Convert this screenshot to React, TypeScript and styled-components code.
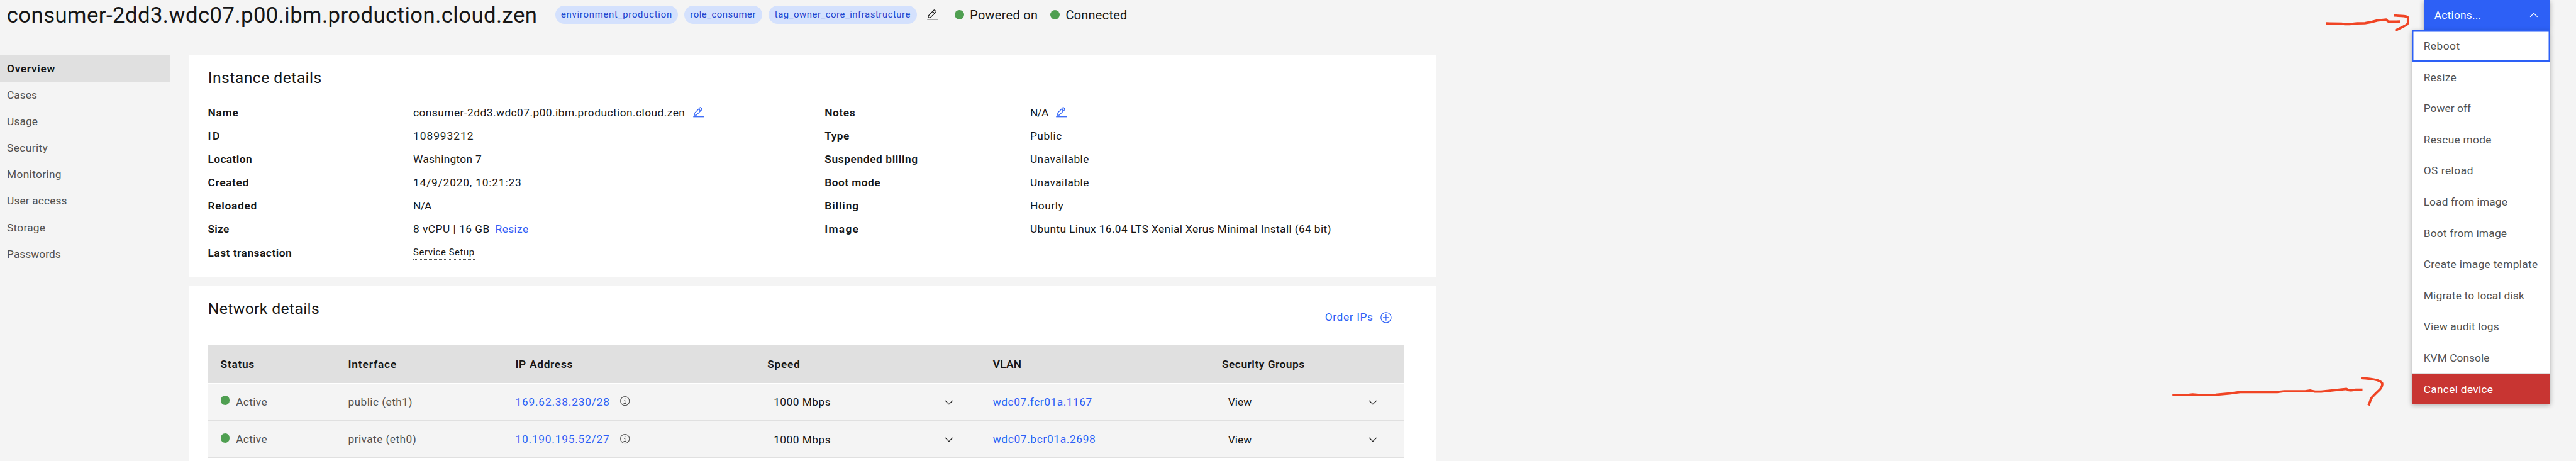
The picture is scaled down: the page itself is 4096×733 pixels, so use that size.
import React from "react";
import styled, { createGlobalStyle, css } from "styled-components";

/* Converts a design pixel (3306px-wide canvas) to a screen pixel. */
const u = (n: number) => `${+(n * 1.23896).toFixed(3)}px`;

const color = {
  page: "#f4f4f4",
  surface: "#ffffff",
  layer: "#e0e0e0",
  text: "#161616",
  muted: "#525252",
  blue: "#2d60f6",
  tag: "#d4e1fd",
  tagText: "#2146cf",
  green: "#4f9f51",
  red: "#c83532",
  ink: "#f04424",
};

const GlobalStyle = createGlobalStyle`
  *, *::before, *::after { box-sizing: border-box; }
  html, body { margin: 0; padding: 0; background: ${color.page}; }
  body {
    font-family: Roboto, "Noto Sans", sans-serif;
    font-size: ${u(14)};
    line-height: ${u(18)};
    color: ${color.text};
    overflow: hidden;
  }
`;

const Page = styled.div`
  position: relative;
  width: 4096px;
  height: 733px;
  overflow: hidden;
`;

/* Text run with its own tracking, given in thousandths of an em. */
const Text = styled.span<{ $track?: number }>`
  letter-spacing: ${(p) => (p.$track ?? 20) / 1000}em;
  white-space: nowrap;
`;

const Icon = styled.svg<{ $size?: number }>`
  display: block;
  flex: none;
  width: ${(p) => u(p.$size ?? 16)};
  height: ${(p) => u(p.$size ?? 16)};
  fill: currentColor;
`;

const Dot = styled.span`
  flex: none;
  width: ${u(12)};
  height: ${u(12)};
  border-radius: 50%;
  background: ${color.green};
`;

/* ---------- header ---------- */

const Header = styled.header`
  display: flex;
  align-items: center;
  height: ${u(38)};
  padding: 0 ${u(33)} 0 ${u(8.7)};
  margin-bottom: ${u(33)};
`;

const Title = styled.h1`
  flex: none;
  width: ${u(704.2)};
  margin: 0;
  padding-top: ${u(0.9)};
  font-size: ${u(28)};
  line-height: ${u(36)};
  font-weight: 400;
`;

const Tags = styled.div`
  display: flex;
  gap: ${u(8.1)};
`;

const Tag = styled.span<{ $width: number }>`
  display: flex;
  align-items: center;
  justify-content: center;
  width: ${(p) => u(p.$width)};
  height: ${u(24)};
  border-radius: ${u(12)};
  background: ${color.tag};
  color: ${color.tagText};
  font-size: ${u(12)};
`;

const EditTags = styled.button`
  display: flex;
  margin: 0 ${u(20.2)} 0 ${u(12.1)};
  padding: 0;
  border: 0;
  background: none;
  color: ${color.text};
`;

const Status = styled.div`
  display: flex;
  align-items: center;
  width: ${u(122.9)};
  gap: ${u(7.5)};
  font-size: ${u(16)};
  line-height: ${u(22)};
`;

const StatusText = styled(Text)`
  padding-top: ${u(1.2)};
`;

const Actions = styled.div`
  position: relative;
  align-self: flex-start;
  margin-left: auto;
`;

const ActionsButton = styled.button`
  display: flex;
  align-items: center;
  justify-content: space-between;
  width: ${u(162)};
  height: ${u(39)};
  padding: 0 ${u(13)} ${u(0.7)} ${u(13.2)};
  border: 0;
  background: ${color.blue};
  color: #fff;
  font: inherit;
  box-shadow: 0 ${u(2)} ${u(6)} rgba(0, 0, 0, 0.3);
`;

const Menu = styled.ul`
  position: absolute;
  top: 100%;
  right: 0;
  z-index: 2;
  width: ${u(178)};
  margin: 0;
  padding: 0;
  list-style: none;
  background: ${color.surface};
  box-shadow: 0 ${u(2)} ${u(6)} rgba(0, 0, 0, 0.3);
`;

const MenuItem = styled.li<{ $focused?: boolean; $danger?: boolean }>`
  display: flex;
  align-items: center;
  height: ${u(40)};
  padding: ${u(0.6)} 0 0 ${u(15.4)};
  color: ${color.muted};
  ${(p) =>
    p.$focused &&
    css`
      box-shadow: inset 0 0 0 ${u(2)} ${color.blue};
    `}
  ${(p) =>
    p.$danger &&
    css`
      padding-top: ${u(1.4)};
      border-top: ${u(1)} solid ${color.layer};
      background: ${color.red};
      background-clip: padding-box;
      color: #fff;
    `}
`;

/* ---------- body ---------- */

const Body = styled.div`
  display: flex;
  align-items: flex-start;
  gap: ${u(24)};
`;

const SideNav = styled.nav`
  flex: none;
  width: ${u(219)};
`;

const NavItem = styled.a<{ $active?: boolean }>`
  display: flex;
  align-items: center;
  height: ${u(34)};
  padding-left: ${u(8.9)};
  color: ${(p) => (p.$active ? color.text : color.muted)};
  background: ${(p) => (p.$active ? color.layer : "transparent")};
  font-weight: ${(p) => (p.$active ? 600 : 400)};
`;

const Content = styled.main`
  display: flex;
  flex-direction: column;
  gap: ${u(12)};
  width: ${u(1600)};
`;

const Card = styled.section<{ $height: number }>`
  height: ${(p) => u(p.$height)};
  padding: ${u(16.3)} ${u(41)} 0 ${u(24)};
  background: ${color.surface};
`;

const CardTitle = styled.h2`
  margin: 0;
  font-size: ${u(20)};
  line-height: ${u(26)};
  font-weight: 400;
`;

const Details = styled.div`
  display: flex;
  margin: ${u(16)} 0 0 ${u(-0.3)};
`;

const DetailList = styled.dl`
  flex: none;
  width: ${u(791.7)};
  margin: 0;
`;

const DetailRow = styled.div`
  display: flex;
  align-items: center;
  height: ${u(30)};
`;

const DetailLabel = styled.dt`
  flex: none;
  width: ${u(263.6)};
  font-weight: 600;
`;

const DetailValue = styled.dd`
  display: flex;
  align-items: center;
  margin: 0;
`;

const Link = styled.a<{ $gap?: number }>`
  display: flex;
  margin-left: ${(p) => u(p.$gap ?? 0)};
  color: ${color.blue};
`;

const Definition = styled(Text)`
  margin-top: ${u(1.6)};
  border-bottom: ${u(1)} dotted ${color.muted};
  font-size: ${u(12)};
  line-height: ${u(16)};
`;

/* ---------- network table ---------- */

const CardHeader = styled.div`
  display: flex;
  align-items: flex-start;
  justify-content: space-between;
  height: ${u(59.7)};
`;

const OrderButton = styled.button`
  display: flex;
  align-items: center;
  gap: ${u(8.5)};
  height: ${u(48)};
  padding: 0 ${u(15)} 0 0;
  border: 0;
  background: none;
  color: ${color.blue};
  font: inherit;
`;

const Row = styled.div`
  display: grid;
  grid-template-columns: 163.7fr 214.7fr 323.5fr 289.3fr 294fr 249.8fr;
  height: ${u(48)};
  border-bottom: ${u(1)} solid ${color.layer};
  background: ${color.page};
  color: ${color.muted};
`;

const HeadRow = styled(Row)`
  height: ${u(49)};
  border-bottom-color: ${color.surface};
  background: ${color.layer};
  background-clip: padding-box;
  color: ${color.text};
  font-weight: 600;
`;

const Cell = styled.div`
  display: flex;
  align-items: center;
  padding: 0 ${u(16)};
`;

const State = styled.span`
  display: flex;
  align-items: center;
  gap: ${u(7.8)};

  ${Dot} {
    margin-bottom: ${u(3)};
  }
`;

const Info = styled.span`
  margin: 0 0 ${u(1)} ${u(12.5)};
`;

const Select = styled.div`
  display: flex;
  align-items: center;
  justify-content: space-between;
  width: 100%;
  padding: ${u(1.1)} ${u(16)} 0 ${u(8)};
  color: ${color.text};
`;

/* ---------- hand-drawn annotations ---------- */

const Annotations = styled.svg`
  position: absolute;
  inset: 0;
  z-index: 3;
  width: 100%;
  height: 100%;
  pointer-events: none;
  fill: none;
  stroke: ${color.ink};
  stroke-width: 6;
  stroke-linejoin: round;
`;

/* ---------- icons ---------- */

const EditIcon = () => (
  <Icon viewBox="0 0 32 32">
    <rect x="2" y="26" width="28" height="2" />
    <path d="M25.4,9c0.8-0.8,0.8-2,0-2.8l-3.6-3.6c-0.8-0.8-2-0.8-2.8,0l-15,15V24h6.4L25.4,9z M20.4,4L24,7.6l-3,3L17.4,7L20.4,4z M6,22v-3.6l10-10l3.6,3.6l-10,10H6z" />
  </Icon>
);

const InfoIcon = () => (
  <Icon viewBox="0 0 32 32" $size={14}>
    <path d="M17 22V14H13v2h2v6H12v2h8V22zM16,8a1.5,1.5,0,1,0,1.5,1.5A1.5,1.5,0,0,0,16,8Z" />
    <path d="M16,30A14,14,0,1,1,30,16,14,14,0,0,1,16,30ZM16,4A12,12,0,1,0,28,16,12,12,0,0,0,16,4Z" />
  </Icon>
);

const AddIcon = () => (
  <Icon viewBox="0 0 32 32">
    <path d="M16,4c6.6,0,12,5.4,12,12s-5.4,12-12,12S4,22.6,4,16S9.4,4,16,4 M16,2C8.3,2,2,8.3,2,16s6.3,14,14,14s14-6.3,14-14S23.7,2,16,2z" />
    <path d="M24 15H17V8H15v7H8v2h7v7h2V17h7z" />
  </Icon>
);

const ChevronDown = () => (
  <Icon viewBox="0 0 32 32">
    <path d="M16 22 6 12 7.4 10.6 16 19.2 24.6 10.6 26 12z" />
  </Icon>
);

const ChevronUp = () => (
  <Icon viewBox="0 0 32 32">
    <path d="M16 10 26 20 24.6 21.4 16 12.8 7.4 21.4 6 20z" />
  </Icon>
);

/* ---------- data: [text, tracking] ---------- */

type Run = [string, number];

const HOST = "consumer-2dd3.wdc07.p00.ibm.production.cloud.zen";

const tags: { run: Run; width: number }[] = [
  { run: ["environment_production", 50.8], width: 156.9 },
  { run: ["role_consumer", 35.9], width: 100 },
  { run: ["tag_owner_core_infrastructure", 36.5], width: 191 },
];

const nav: Run[] = [
  ["Overview", 38.5],
  ["Cases", 3.5],
  ["Usage", 7.5],
  ["Security", 22.2],
  ["Monitoring", 19.4],
  ["User access", 7.8],
  ["Storage", 13.8],
  ["Passwords", 1.9],
];

const menu: Run[] = [
  ["Reboot", 27.7],
  ["Resize", 15],
  ["Power off", 2.4],
  ["Rescue mode", 16.2],
  ["OS reload", 29.1],
  ["Load from image", 6.5],
  ["Boot from image", 12.2],
  ["Create image template", 18.4],
  ["Migrate to local disk", 12.7],
  ["View audit logs", 10.3],
  ["KVM Console", 2.9],
];

type Detail = { label: Run; value: Run; extra?: "edit" | "resize"; definition?: boolean };

const leftDetails: Detail[] = [
  { label: ["Name", 44.6], value: [HOST, 25.7], extra: "edit" },
  { label: ["ID", 150], value: ["108993212", 55.9] },
  { label: ["Location", 23.6], value: ["Washington 7", 16.4] },
  { label: ["Created", 37.1], value: ["14/9/2020, 10:21:23", 47.2] },
  { label: ["Reloaded", 41.5], value: ["N/A", -40.8] },
  { label: ["Size", 15.4], value: ["8 vCPU | 16 GB", 27.1], extra: "resize" },
  { label: ["Last transaction", 30], value: ["Service Setup", 39.3], definition: true },
];

const rightDetails: Detail[] = [
  { label: ["Notes", 31.7], value: ["N/A", -40.8], extra: "edit" },
  { label: ["Type", 23.9], value: ["Public", 31] },
  { label: ["Suspended billing", 34.4], value: ["Unavailable", 27.8] },
  { label: ["Boot mode", 26.2], value: ["Unavailable", 27.8] },
  { label: ["Billing", 51.2], value: ["Hourly", 30.5] },
  {
    label: ["Image", 72.3],
    value: ["Ubuntu Linux 16.04 LTS Xenial Xerus Minimal Install (64 bit)", 20.7],
  },
];

const columns: Run[] = [
  ["Status", 40.8],
  ["Interface", 49.4],
  ["IP Address", 40.2],
  ["Speed", 39.3],
  ["VLAN", 12.9],
  ["Security Groups", 30.1],
];

const interfaces: { name: Run; ip: Run; vlan: Run }[] = [
  { name: ["public (eth1)", 24.5], ip: ["169.62.38.230/28", 45.4], vlan: ["wdc07.fcr01a.1167", 31] },
  { name: ["private (eth0)", 24.6], ip: ["10.190.195.52/27", 44.6], vlan: ["wdc07.bcr01a.2698", 36.4] },
];

/* ---------- composed parts ---------- */

const T = ({ run }: { run: Run }) => <Text $track={run[1]}>{run[0]}</Text>;

const DetailColumn = ({ items }: { items: Detail[] }) => (
  <DetailList>
    {items.map((d) => (
      <DetailRow key={d.label[0]}>
        <DetailLabel>
          <T run={d.label} />
        </DetailLabel>
        <DetailValue>
          {d.definition ? (
            <Definition $track={d.value[1]}>{d.value[0]}</Definition>
          ) : (
            <T run={d.value} />
          )}
          {d.extra === "edit" && (
            <Link $gap={9}>
              <EditIcon />
            </Link>
          )}
          {d.extra === "resize" && (
            <Link $gap={7.2}>
              <T run={["Resize", 21.1]} />
            </Link>
          )}
        </DetailValue>
      </DetailRow>
    ))}
  </DetailList>
);

export default function App() {
  return (
    <Page>
      <GlobalStyle />
      <Header>
        <Title>
          <T run={[HOST, 12.6]} />
        </Title>
        <Tags>
          {tags.map((t) => (
            <Tag key={t.run[0]} $width={t.width}>
              <T run={t.run} />
            </Tag>
          ))}
        </Tags>
        <EditTags aria-label="Edit tags">
          <EditIcon />
        </EditTags>
        <Status>
          <Dot />
          <StatusText $track={18.2}>Powered on</StatusText>
        </Status>
        <Status>
          <Dot />
          <StatusText $track={17.1}>Connected</StatusText>
        </Status>
        <Actions>
          <ActionsButton>
            <T run={["Actions...", 12.8]} />
            <ChevronUp />
          </ActionsButton>
          <Menu>
            {menu.map((m, i) => (
              <MenuItem key={m[0]} $focused={i === 0}>
                <T run={m} />
              </MenuItem>
            ))}
            <MenuItem $danger>
              <T run={["Cancel device", 17.2]} />
            </MenuItem>
          </Menu>
        </Actions>
      </Header>

      <Body>
        <SideNav>
          {nav.map((n, i) => (
            <NavItem key={n[0]} $active={i === 0}>
              <T run={n} />
            </NavItem>
          ))}
        </SideNav>

        <Content>
          <Card $height={284}>
            <CardTitle>
              <T run={["Instance details", 16.9]} />
            </CardTitle>
            <Details>
              <DetailColumn items={leftDetails} />
              <DetailColumn items={rightDetails} />
            </Details>
          </Card>

          <Card $height={240}>
            <CardHeader>
              <CardTitle>
                <T run={["Network details", 13.6]} />
              </CardTitle>
              <OrderButton>
                <T run={["Order IPs", 35.7]} />
                <AddIcon />
              </OrderButton>
            </CardHeader>
            <HeadRow>
              {columns.map((c) => (
                <Cell key={c[0]}>
                  <T run={c} />
                </Cell>
              ))}
            </HeadRow>
            {interfaces.map((n) => (
              <Row key={n.name[0]}>
                <Cell>
                  <State>
                    <Dot />
                    <T run={["Active", 19.8]} />
                  </State>
                </Cell>
                <Cell>
                  <T run={n.name} />
                </Cell>
                <Cell>
                  <Link>
                    <T run={n.ip} />
                  </Link>
                  <Info>
                    <InfoIcon />
                  </Info>
                </Cell>
                <Cell>
                  <Select>
                    <T run={["1000 Mbps", 27.3]} />
                    <ChevronDown />
                  </Select>
                </Cell>
                <Cell>
                  <Link>
                    <T run={n.vlan} />
                  </Link>
                </Cell>
                <Cell>
                  <Select>
                    <T run={["View", -0.7]} />
                    <ChevronDown />
                  </Select>
                </Cell>
              </Row>
            ))}
          </Card>
        </Content>
      </Body>

      <Annotations viewBox="0 0 6612 1184" preserveAspectRatio="none">
        <path d="M5971 60 L5980 60.3 L6010 60.7 Q6024 63 6035 61.6 L6050 60 L6070 59.7 Q6086 57.5 6101.7 52.7 L6125 50.3 Q6129.5 56.5 6133 55.6 L6160 55.2" />
        <path d="M6144.5 39.7 L6170 41.3 Q6180.7 42.5 6180.7 45 L6180.7 59 Q6180 63 6170 67.5 L6148 78.5" />
        <path d="M5576 1014.7 L5617 1014 L5628 1012.9 L5648 1014.7 L5687 1013.7 L5723 1010.5 L5750 1007 L5845 1007 L5863 1004.7 L5917 1004.7 L5930 1003 L5942 1005.7 L5958 1005.7 L6023 998.8 Q6028 1003.5 6035 1002.5 L6047 1001 L6064 1001" />
        <path d="M6060 971 Q6085 972 6102 976.5 Q6115 981 6115 986 Q6114 996 6106 1003 Q6090 1018 6086 1024 Q6083 1033 6079.5 1041" />
      </Annotations>
    </Page>
  );
}
